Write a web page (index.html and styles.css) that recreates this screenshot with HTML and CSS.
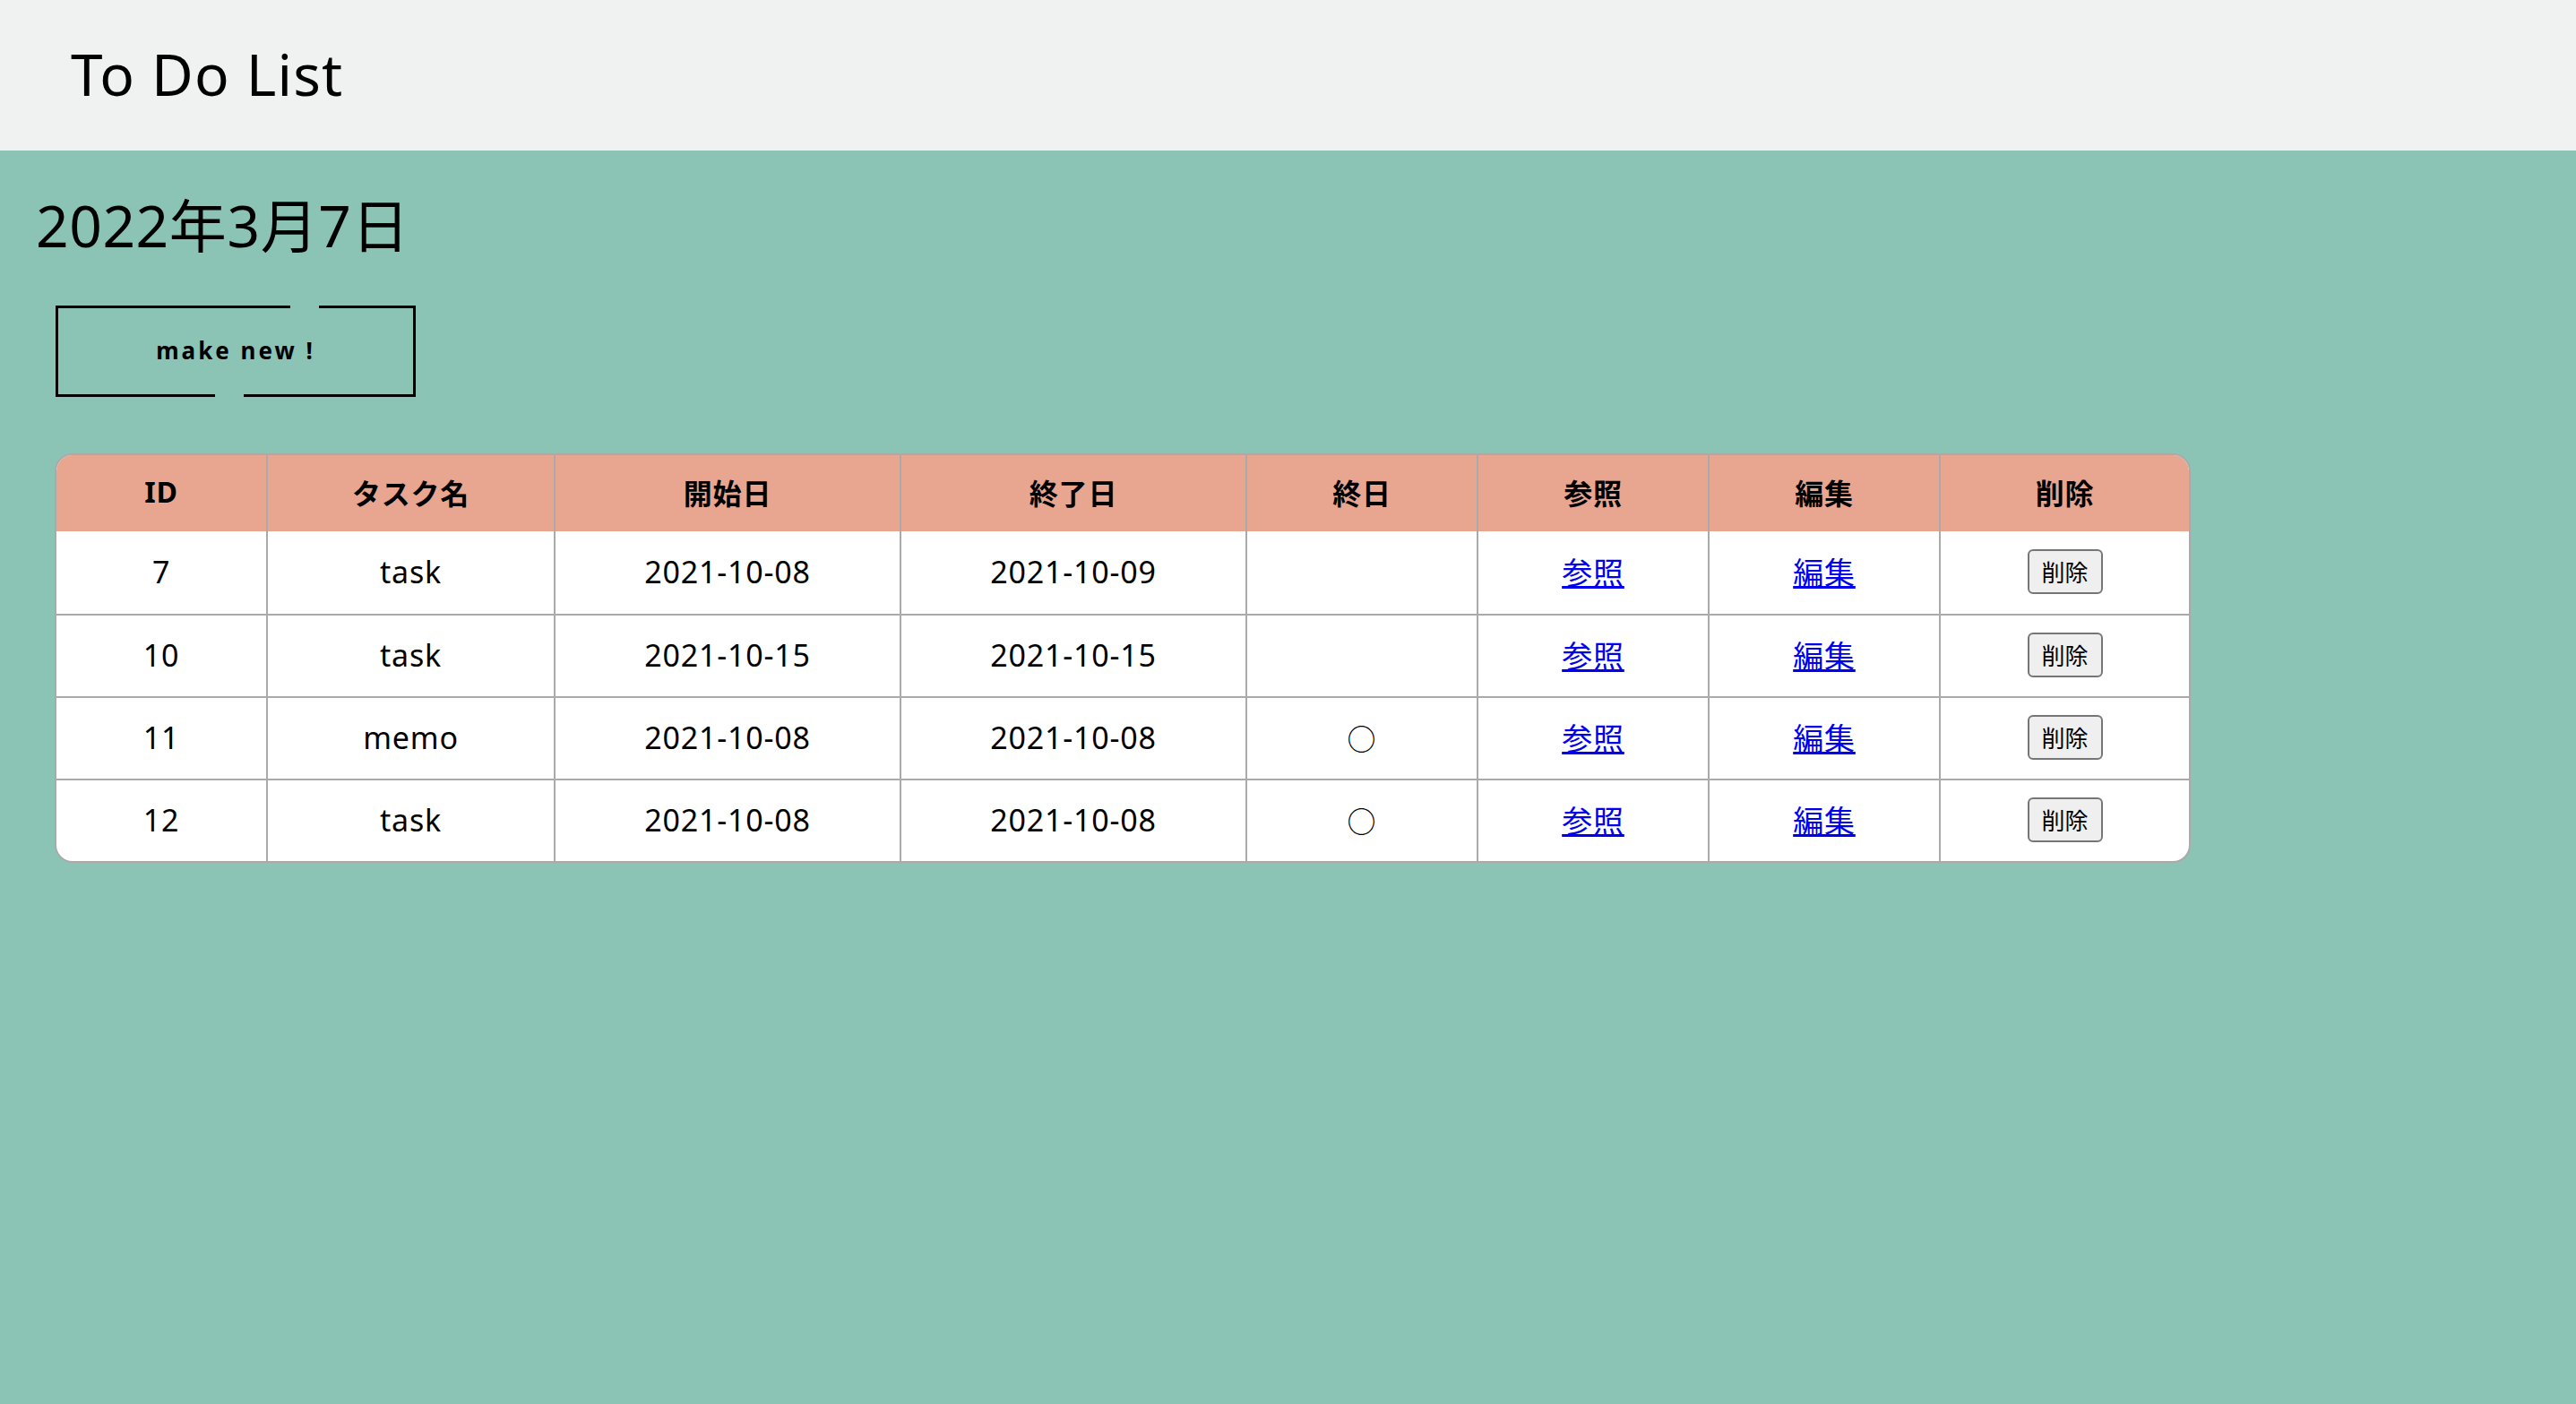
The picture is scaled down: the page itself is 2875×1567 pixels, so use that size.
FILE: index.html
```html
<!DOCTYPE html>
<html lang="ja">
<head>
  <meta charset="UTF-8">
  <meta name="viewport" content="width=device-width, initial-scale=1.0">
  <title>To Do List</title>
  <link rel="stylesheet" href="styles.css">
</head>
<body>
  <header class="site-header">
    <h1 class="site-title">To Do List</h1>
  </header>

  <main class="content">
    <h2 class="today">2022年3月7日</h2>

    <a href="#" class="btn-new">make new !</a>

    <table class="task-table">
      <colgroup>
        <col class="col-id">
        <col class="col-name">
        <col class="col-date">
        <col class="col-date">
        <col class="col-small">
        <col class="col-small">
        <col class="col-small">
        <col class="col-del">
      </colgroup>
      <thead>
        <tr>
          <th>ID</th>
          <th>タスク名</th>
          <th>開始日</th>
          <th>終了日</th>
          <th>終日</th>
          <th>参照</th>
          <th>編集</th>
          <th>削除</th>
        </tr>
      </thead>
      <tbody>
        <tr>
          <td>7</td>
          <td>task</td>
          <td>2021-10-08</td>
          <td>2021-10-09</td>
          <td></td>
          <td><a href="#">参照</a></td>
          <td><a href="#">編集</a></td>
          <td><button type="button" class="btn-del">削除</button></td>
        </tr>
        <tr>
          <td>10</td>
          <td>task</td>
          <td>2021-10-15</td>
          <td>2021-10-15</td>
          <td></td>
          <td><a href="#">参照</a></td>
          <td><a href="#">編集</a></td>
          <td><button type="button" class="btn-del">削除</button></td>
        </tr>
        <tr>
          <td>11</td>
          <td>memo</td>
          <td>2021-10-08</td>
          <td>2021-10-08</td>
          <td class="allday">○</td>
          <td><a href="#">参照</a></td>
          <td><a href="#">編集</a></td>
          <td><button type="button" class="btn-del">削除</button></td>
        </tr>
        <tr>
          <td>12</td>
          <td>task</td>
          <td>2021-10-08</td>
          <td>2021-10-08</td>
          <td class="allday">○</td>
          <td><a href="#">参照</a></td>
          <td><a href="#">編集</a></td>
          <td><button type="button" class="btn-del">削除</button></td>
        </tr>
      </tbody>
    </table>
  </main>
</body>
</html>
```

FILE: styles.css
```css
body {
  margin: 0;
  min-height: 100vh;
  background-color: #8bc4b5;
  color: #000;
  font-family: "Noto Sans", "Noto Sans CJK JP", sans-serif;
}

.site-header {
  height: 168px;
  display: flex;
  align-items: center;
  padding-left: 79px;
  background-color: #f0f2f1;
}
.site-title {
  margin: 0 0 4px;
  font-size: 64px;
  font-weight: normal;
  letter-spacing: 1.2px;
}

.content {
  padding: 0 0 40px 40px;
}
.today {
  margin: 0;
  padding-top: 46px;
  font-size: 64px;
  font-weight: normal;
  line-height: 1.2;
  letter-spacing: 0.6px;
}

.btn-new {
  position: relative;
  display: flex;
  align-items: center;
  justify-content: center;
  width: 402px;
  height: 102px;
  box-sizing: border-box;
  margin: 50px 0 0 22px;
  padding-bottom: 2px;
  border: 3px solid #000;
  color: #000;
  text-decoration: none;
  font-size: 26px;
  font-weight: bold;
  letter-spacing: 3px;
}
.btn-new::before,
.btn-new::after {
  content: "";
  position: absolute;
  width: 32px;
  height: 5px;
  background-color: #8bc4b5;
}
.btn-new::before {
  top: -4px;
  left: 259px;
}
.btn-new::after {
  bottom: -4px;
  left: 175px;
}

.task-table {
  width: 2381px;
  margin: 63px 0 0 21px;
  table-layout: fixed;
  border-collapse: separate;
  border-spacing: 0;
  border: 2px solid #aaa;
  border-radius: 20px;
  overflow: hidden;
  background: #fff;
  font-size: 34px;
  letter-spacing: 0.8px;
}
.col-id { width: 236px; }
.col-name { width: 321px; }
.col-date { width: 386px; }
.col-small { width: 258px; }
.col-del { width: 277px; }

.task-table th,
.task-table td {
  text-align: center;
  padding: 0;
  border-right: 2px solid #aaa;
}
.task-table th:last-child,
.task-table td:last-child {
  border-right: none;
}
.task-table th {
  height: 82px;
  padding-bottom: 3px;
  background-color: #e8a690;
  font-weight: bold;
  font-size: 32px;
}
.task-table td {
  height: 88px;
  padding-bottom: 2px;
  border-top: 2px solid #aaa;
}
.task-table tbody tr:first-child td {
  border-top: none;
  height: 90px;
}
.task-table a {
  color: #0000ee;
}
.allday {
  font-family: "Noto Sans CJK JP", sans-serif;
  font-size: 32px;
}

.btn-del {
  width: 84px;
  height: 50px;
  padding: 0;
  border: 2px solid #767676;
  border-radius: 6px;
  background-color: #efefef;
  color: #000;
  font-family: "Noto Sans CJK JP", sans-serif;
  font-size: 26px;
  letter-spacing: 0;
}
```
